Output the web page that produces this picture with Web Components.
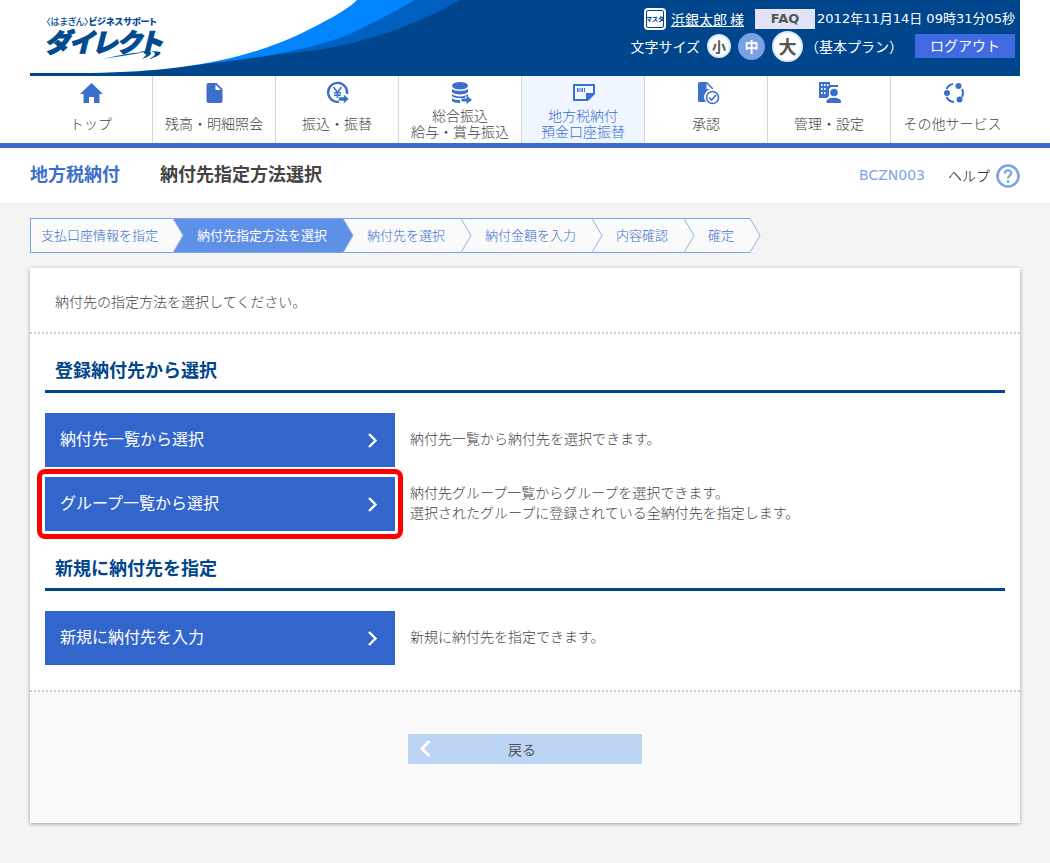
<!DOCTYPE html>
<html lang="ja">
<head>
<meta charset="utf-8">
<meta name="viewport" content="width=device-width, initial-scale=1">
<title>納付先指定方法選択</title>
<style>
  :root {
    --navy: #00468c;
    --blue: #3c6ecc;
    --action: #3366cc;
    --soft: #7ba3e8;
    --gutter: 30px;
    --latin: "DejaVu Sans", "Noto Sans CJK JP", sans-serif;
  }
  body {
    margin: 0;
    background: #f4f4f4;
    color: #444;
    font: 300 14px/20px "Noto Sans CJK JP", sans-serif;
  }
</style>
</head>
<body>
<bank-page></bank-page>

<script>
const define = (name, html) => {
  const template = document.createElement('template');
  template.innerHTML = html;
  customElements.define(name, class extends HTMLElement {
    constructor() {
      super();
      this.attachShadow({ mode: 'open' }).append(template.content.cloneNode(true));
    }
  });
};

define('brand-logo', `
<style>
  :host { display: block; color: #004b90; position: relative; }
  a { display: block; color: inherit; text-decoration: none; }
  .lead { display: flex; font-size: 9px; line-height: 12px; font-weight: 900; font-feature-settings: "palt"; white-space: nowrap; padding-left: 2px; }
  .lead small { font-size: 9px; font-weight: 500; }
  .name { display: block; font-size: 26px; line-height: 26px; font-weight: 900; font-style: italic; font-feature-settings: "palt"; -webkit-text-stroke: 1px; white-space: nowrap; }
  svg { position: absolute; right: 0; bottom: -6px; }
</style>
<a href="#"><span class="lead"><small>〈はまぎん〉</small>ビジネスサポート</span><span class="name">ダイレクト</span></a>
<svg width="62" height="11" viewBox="0 0 62 11" aria-hidden="true">
  <defs><linearGradient id="g"><stop offset="0" stop-color="#35a9ef"/><stop offset=".6" stop-color="#004b90"/></linearGradient></defs>
  <path d="M2 9Q26 3 46 2Q24 6 2 9Z" fill="url(#g)"/>
  <path d="M39 1Q55 1 50 5Q48 7 42 9Q47 5 46 3Q44 2 39 1ZM50 1Q63 1 60 4Q57 7 49 9Q55 6 55 4Q55 2 50 1Z" fill="#004b90"/>
</svg>`);

define('size-picker', `
<style>
  :host { display: flex; align-items: center; gap: 7px; }
  button { border: 2px solid #dce8fb; border-radius: 50%; padding: 0; background: #fff; color: #555; font: bold 14px/16px "Noto Sans CJK JP", sans-serif; width: 24px; height: 24px; }
  .m { width: 27px; height: 27px; background: #7ba0e5; border-color: #7ba0e5; color: #fff; }
  .l { width: 31px; height: 31px; font-size: 18px; line-height: 20px; }
</style>
<span>文字サイズ</span>
<button type="button">小</button><button type="button" class="m">中</button><button type="button" class="l">大</button>`);

define('app-header', `
<style>
  :host { display: block; padding: 0 var(--gutter); background: #fff; }
  header { display: flex; justify-content: space-between; position: relative; height: 76px; background: var(--navy); color: #fff; overflow: hidden; }
  .wave { position: absolute; left: 0; top: 0; }
  brand-logo { margin: 16px 0 0 14px; width: 118px; height: 39px; }
  .tools { position: relative; display: flex; flex-direction: column; align-items: flex-end; padding: 8px 5px 0 0; font-weight: 400; }
  .row { display: flex; align-items: center; height: 22px; white-space: nowrap; }
  .row + .row { height: 32px; }
  .badge { box-sizing: border-box; width: 22px; height: 22px; border: 2px solid #fff; border-radius: 4px; padding-top: 3px; background: #fff; color: var(--navy); font-size: 6px; line-height: 12px; font-weight: 900; outline: 1px solid var(--navy); outline-offset: -3px; margin-right: 5px; }
  a { color: inherit; }
  .name { margin-right: 11px; }
  .faq { width: 60px; height: 20px; margin-right: 2px; border: 0; padding: 0; background: #e3e3f8; color: #555; font: bold 13px/20px var(--latin); }
  time { font: 13px/20px var(--latin); }
  .logout { width: 100px; height: 24px; margin-left: 12px; border: 0; padding: 0 0 2px; background: #4169e1; color: #fff; font: 14px/22px "Noto Sans CJK JP", sans-serif; }
  .plan { margin-left: 2px; }
</style>
<header>
  <svg class="wave" width="440" height="76" viewBox="0 0 440 76" aria-hidden="true">
    <path d="M0 0H430Q350 46 253 54L150 67L0 73Z" fill="#0060c0"/>
    <path d="M0 0H385C368 10 345 22 320 34C270 54 215 59 150 67L0 73Z" fill="#0084ff"/>
    <path d="M0 0H327C316 11 294 22 270 34C215 60 150 72 60 73H0Z" fill="#fff"/>
  </svg>
  <brand-logo></brand-logo>
  <div class="tools">
    <div class="row"><span class="badge">マスタ</span><a class="name" href="#">浜銀太郎 様</a><button class="faq" type="button">FAQ</button><time datetime="2012-11-14T09:31:05">2012年11月14日 09時31分05秒</time></div>
    <div class="row"><size-picker></size-picker><span class="plan">（基本プラン）</span><button class="logout" type="button">ログアウト</button></div>
  </div>
</header>`);

define('nav-item', `
<style>
  :host { display: block; border-right: 1px solid #d4d4d4; }
  :host(:last-of-type) { border-right: 0; }
  :host([current]) { background: #eff6ff; }
  a { display: flex; flex-direction: column; align-items: center; height: 62px; padding-top: 5px; color: #444; text-decoration: none; }
  :host([current]) a { color: var(--blue); }
  ::slotted(svg) { width: 24px; height: 24px; fill: var(--blue); stroke: none; overflow: visible; flex: none; }
  .label { display: grid; align-content: center; height: 36px; line-height: 16px; text-align: center; white-space: nowrap; }
</style>
<a href="#"><slot name="icon"></slot><span class="label"><slot></slot></span></a>`);

define('main-nav', `
<style>
  :host { display: block; background: #fff; border-bottom: 5px solid var(--blue); padding: 0 var(--gutter); }
  nav { display: grid; grid-template-columns: repeat(8, minmax(0, 1fr)); padding-right: 6px; }
</style>
<nav>
  <nav-item><svg slot="icon" viewBox="0 0 24 24"><path d="M12.500 2L24 13h-3.500v9H15v-6h-5v6H4.500v-9H1z"/></svg>トップ</nav-item>
  <nav-item><svg slot="icon" viewBox="0 0 24 24"><path fill-rule="evenodd" d="M6 2h8.500L20.500 8v12a2 2 0 0 1-2 2H6.500a2 2 0 0 1-2-2V4a2 2 0 0 1 1.500-2zM13.500 3.500V9H19z"/></svg>残高・明細照会</nav-item>
  <nav-item><svg slot="icon" viewBox="0 0 24 24"><g fill="none" stroke="#3c6ecc"><path d="M14 20.800A9.500 9.500 0 1 1 22 13" stroke-width="2.400"/><path d="M8.500 6l4 5.500L16.500 6M12.500 11.500V17M9 11.800h7M9 14.300h7" stroke-width="1.600"/></g><path d="M13.500 16h5v-3l5.500 5-5.500 5v-3h-5z" stroke="#fff" stroke-width=".6"/></svg>振込・振替</nav-item>
  <nav-item><svg slot="icon" viewBox="0 0 24 24"><ellipse cx="12" cy="4.800" rx="8" ry="3.800"/><path d="M4 7.700c2 3 14 3 16 0v3.300c-2 3.300-14 3.300-16 0zM4 13c2 3.300 14 3.300 16 0v2.500h-3v1.500h-5c-4 0-7-.6-8-2zM4 17c2 2 5 2 8 2v3c-4 0-7-.7-8-2z"/><path d="M13.500 17.500h5v-3l5.500 4.500-5.500 4v-2.500h-5z"/></svg>総合振込<br>給与・賞与振込</nav-item>
  <nav-item current><svg slot="icon" viewBox="0 0 24 24"><path fill-rule="evenodd" d="M3 3h20a1 1 0 0 1 1 1v9l-7 7H3a1 1 0 0 1-1-1V4a1 1 0 0 1 1-1zM4 5v13h11v-6h7V5z"/><path d="M6 7h1.500v4H6zM8.500 7h1v4h-1zM10.500 7H12v4h-1.500zM13 7h1v4h-1z"/></svg>地方税納付<br>預金口座振替</nav-item>
  <nav-item><svg slot="icon" viewBox="0 0 24 24"><path fill-rule="evenodd" d="M5.500 1H13l6 6v1a8 8 0 0 0-7 13H5.500a1.500 1.500 0 0 1-1.500-1.500v-17A1.500 1.500 0 0 1 5.500 1zM12.500 2.500V8H18z"/><g fill="none" stroke="#3c6ecc"><circle cx="18.500" cy="16.500" r="6" stroke-width="1.600"/><path d="M15 16.500l2.500 2.500 4.500-5" stroke-width="1.600"/></g></svg>承認</nav-item>
  <nav-item><svg slot="icon" viewBox="0 0 24 24"><path fill-rule="evenodd" d="M2 1h11v3h8v2h-7l-2 2v7l-2 2H2zM4 3v2h1.500V3zM7 3v2h1.500V3zM10 3v2h1.500V3zM4 7v2h1.500V7zM7 7v2h1.500V7zM4 11v2h1.500v-2zM7 11v2h1.500v-2z"/><circle cx="17" cy="11.500" r="3.800"/><path d="M9.500 22v-1.500c0-5 14.500-5 14.500 0V22z"/></svg>管理・設定</nav-item>
  <nav-item><svg slot="icon" viewBox="0 0 24 24"><g fill="none" stroke="#3c6ecc" stroke-width="2"><path d="M5.500 8a9 9 0 0 1 6.500-5M21 8a9 9 0 0 1 0 8M5.500 16a9 9 0 0 0 7.500 5"/></g><circle cx="17.500" cy="5" r="3"/><circle cx="6" cy="12" r="3"/><circle cx="18.500" cy="18.500" r="3"/></svg>その他サービス</nav-item>
</nav>`);

define('title-bar', `
<style>
  :host { display: flex; align-items: center; height: 55px; padding: 0 var(--gutter); background: #fff; }
  h1, p { margin: 0; padding-bottom: 6px; font-size: 18px; line-height: 26px; font-weight: bold; }
  p { color: var(--blue); margin-right: 40px; }
  .code { margin-left: auto; padding-bottom: 2px; color: var(--soft); font: 14px/20px var(--latin); }
  a { display: flex; align-items: center; gap: 6px; margin-left: 23px; color: #000; text-decoration: none; }
  a span { padding-bottom: 2px; }
</style>
<p>地方税納付</p><h1>納付先指定方法選択</h1>
<span class="code">BCZN003</span>
<a href="#"><span>ヘルプ</span><svg width="24" height="24" viewBox="0 0 24 24" fill="none" stroke="#7ba3e8" aria-hidden="true"><circle cx="12" cy="12" r="10.500" stroke-width="2.600"/><path d="M8.800 9.700c0-4.300 6.400-4.300 6.400-.4 0 2.600-3.200 2.700-3.200 5.200" stroke-width="2.200"/><circle cx="12" cy="17.500" r="1.400" fill="#7ba3e8" stroke="none"/></svg></a>`);

define('step-item', `
<style>
  :host { display: block; position: relative; height: 33px; padding: 0 16px 0 24px; background: #fafafa; border: solid var(--soft); border-width: 1px 0; color: var(--blue); font-size: 13px; line-height: 32px; white-space: nowrap; }
  :host(:first-of-type) { padding-left: 10px; padding-right: 15px; border-left-width: 1px; }
  :host([current]) { background: #5f90e8; color: #fff; font-weight: 400; }
  svg { position: absolute; z-index: 1; right: -11px; top: -1px; fill: #fafafa; }
  :host([current]) svg { fill: #5f90e8; }
</style>
<slot></slot><svg width="11" height="35" viewBox="0 0 11 35" aria-hidden="true"><path d="M0 0L10 17.500L0 35Z"/><path d="M0 .5L10 17.500L0 34.500" fill="none" stroke="#8fb1ea"/></svg>`);

define('step-list', `
<style>:host { display: flex; margin: 15px var(--gutter); }</style>
<slot></slot>`);

define('choice-row', `
<style>
  :host { display: flex; align-items: center; gap: 15px; }
  button { position: relative; flex: 0 0 350px; display: flex; align-items: center; justify-content: space-between; height: 54px; border: 0; padding: 0 17px 0 15px; background: var(--action); color: #fff; font: 16px/24px "Noto Sans CJK JP", sans-serif; }
  :host([marked]) button::after { content: ""; position: absolute; inset: -8px; border: 5px solid #f00; border-radius: 8px; }
  button span { padding-bottom: 4px; }
  p { margin: 0; padding-bottom: 4px; }
</style>
<button type="button"><span><slot name="label"></slot></span><svg width="11" height="16" viewBox="0 0 11 16" fill="none" stroke="#fff" stroke-width="2.400" aria-hidden="true"><path d="M2 2l6.500 6.500L2 15"/></svg></button>
<p><slot></slot></p>`);

define('choice-group', `
<style>
  :host { display: block; margin: 0 15px; }
  h2 { margin: 0 0 20px; padding: 0 10px 8px; border-bottom: 3px solid var(--navy); color: var(--navy); font-size: 18px; line-height: 26px; }
  .rows { display: grid; gap: 10px; }
</style>
<h2><slot name="heading"></slot></h2><div class="rows"><slot></slot></div>`);

define('content-panel', `
<style>
  :host { display: block; margin: 0 var(--gutter) 40px; background: #fff; box-shadow: 0 1px 4px rgba(0,0,0,.35); }
  .intro { margin: 0; padding: 23px 25px 21px; border-bottom: 2px dotted #ccc; }
  .groups { display: grid; gap: 23px; padding: 22px 0 25px; }
  footer { display: flex; justify-content: center; padding: 42px 0 59px; border-top: 2px dotted #ccc; background: #fafafa; }
  footer button { position: relative; width: 234px; height: 30px; border: 0; padding: 0 6px 0 0; background: #bcd5f4; color: #555; font: 14px/28px "Noto Sans CJK JP", sans-serif; }
  footer svg { position: absolute; left: 12px; top: 6px; }
</style>
<p class="intro"><slot name="intro"></slot></p>
<div class="groups"><slot></slot></div>
<footer><button type="button"><svg width="11" height="17" viewBox="0 0 11 17" fill="none" stroke="#fff" stroke-width="3" aria-hidden="true"><path d="M9.500 1L2 8.500L9.500 16"/></svg>戻る</button></footer>`);

define('bank-page', `
<style>:host { display: block; }</style>
<app-header></app-header>
<main-nav></main-nav>
<title-bar></title-bar>
<main>
  <step-list>
    <step-item>支払口座情報を指定</step-item><step-item current>納付先指定方法を選択</step-item><step-item>納付先を選択</step-item><step-item>納付金額を入力</step-item><step-item>内容確認</step-item><step-item>確定</step-item>
  </step-list>
  <content-panel>
    <span slot="intro">納付先の指定方法を選択してください。</span>
    <choice-group>
      <span slot="heading">登録納付先から選択</span>
      <choice-row><span slot="label">納付先一覧から選択</span>納付先一覧から納付先を選択できます。</choice-row>
      <choice-row marked><span slot="label">グループ一覧から選択</span>納付先グループ一覧からグループを選択できます。<br>選択されたグループに登録されている全納付先を指定します。</choice-row>
    </choice-group>
    <choice-group>
      <span slot="heading">新規に納付先を指定</span>
      <choice-row><span slot="label">新規に納付先を入力</span>新規に納付先を指定できます。</choice-row>
    </choice-group>
  </content-panel>
</main>`);
</script>
</body>
</html>
